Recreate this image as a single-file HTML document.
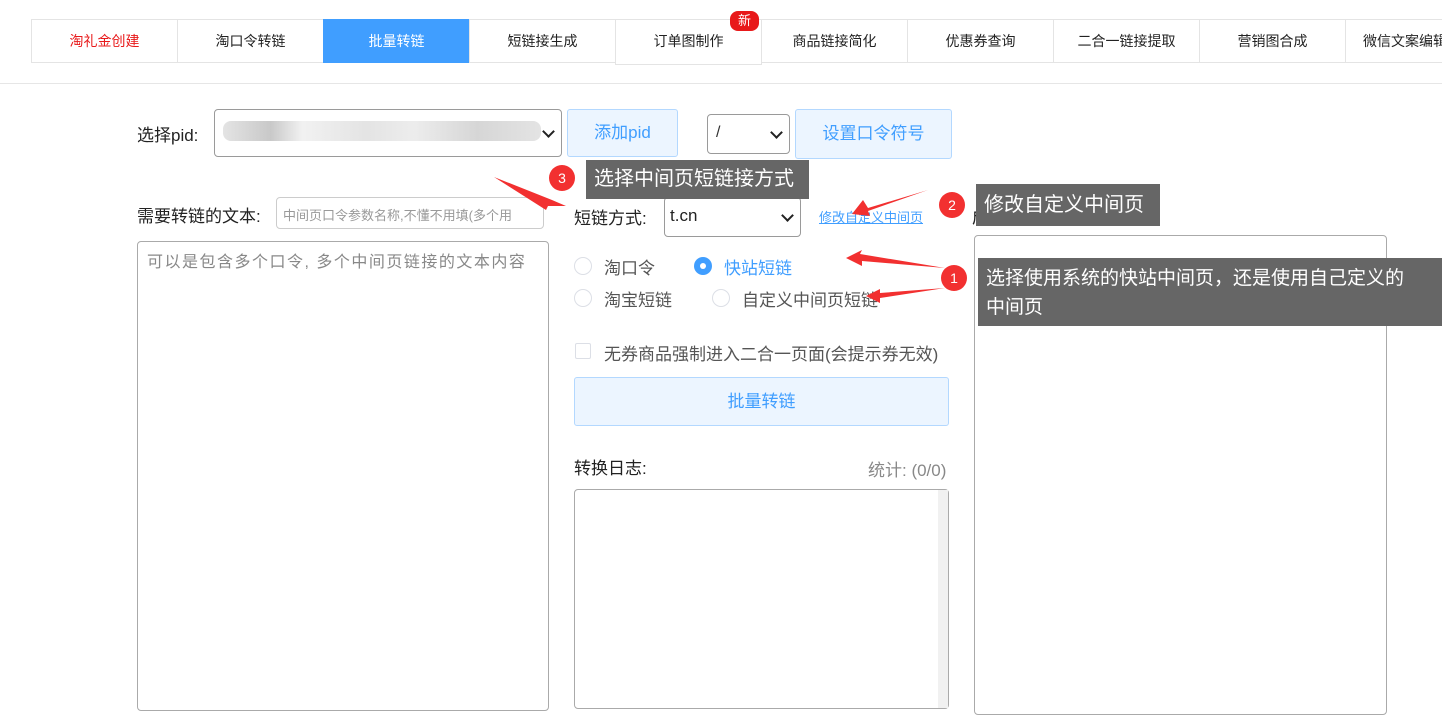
<!DOCTYPE html>
<html><head><meta charset="utf-8"><style>
*{box-sizing:border-box;margin:0;padding:0}
body{width:1442px;height:699px;overflow:hidden;background:#fff;font-family:"Liberation Sans","Noto Sans CJK SC",sans-serif;color:#333;position:relative}
.a{position:absolute}
.tab{position:absolute;top:19px;height:44px;width:147px;border:1px solid #e4e4e4;font-size:14px;line-height:42px;text-align:center;color:#222;background:#fff}
.box{position:absolute;border:1px solid #9a9a9a;border-radius:4px;background:#fff}
.btn{position:absolute;background:#ecf5ff;border:1px solid #b3d8ff;color:#409eff;border-radius:3px;text-align:center;font-size:16px}
.tip{position:absolute;background:#666;color:#fff;font-size:20px;padding:0 8px;white-space:nowrap}
.num{position:absolute;width:26px;height:26px;border-radius:50%;background:#f23030;color:#fff;font-size:14px;text-align:center;line-height:26px}
.r{position:absolute;width:18px;height:18px;border-radius:50%;border:1px solid #dcdfe6}
.lbl{position:absolute;font-size:17px;color:#555}
.chev{position:absolute;right:8px;top:11px;width:9px;height:9px;border-right:2px solid #222;border-bottom:2px solid #222;transform:rotate(45deg)}
</style></head><body>
<div class="tab" style="left:31px;color:#e8191a">淘礼金创建</div>
<div class="tab" style="left:177px">淘口令转链</div>
<div class="tab" style="left:323px;background:#409eff;color:#fff;border-color:#409eff">批量转链</div>
<div class="tab" style="left:469px">短链接生成</div>
<div class="tab" style="left:615px;height:46px">订单图制作</div>
<div class="a" style="left:730px;top:11px;width:29px;height:20px;background:#e8191a;color:#fff;border-radius:8px;font-size:13px;text-align:center;line-height:20px">新</div>
<div class="tab" style="left:761px">商品链接简化</div>
<div class="tab" style="left:907px">优惠券查询</div>
<div class="tab" style="left:1053px">二合一链接提取</div>
<div class="tab" style="left:1199px">营销图合成</div>
<div class="tab" style="left:1345px;width:120px">微信文案编辑</div>
<div class="a" style="left:0;top:83px;width:1442px;height:1px;background:#e6e6e6"></div>

<div class="a" style="left:137px;top:121px;font-size:17px;color:#222">选择pid:</div>
<div class="box" style="left:214px;top:109px;width:348px;height:48px">
 <div class="a" style="left:8px;top:11px;width:318px;height:20px;background:linear-gradient(90deg,#ddd,#bbb 15%,#eee 25%,#ddd 45%,#e8e8e8 60%,#ccc 80%,#ddd);border-radius:8px;opacity:.8"></div>
 <div class="chev" style="top:17px"></div></div>
<div class="btn" style="left:567px;top:109px;width:111px;height:48px;line-height:46px;font-size:17px">添加pid</div>
<div class="box" style="left:707px;top:114px;width:83px;height:40px"><span class="a" style="left:8px;top:9px;font-size:16px">/</span><div class="chev" style="top:13px"></div></div>
<div class="btn" style="left:795px;top:109px;width:157px;height:50px;line-height:48px;font-size:17px">设置口令符号</div>

<div class="a" style="left:137px;top:202px;font-size:17px;color:#222">需要转链的文本:</div>
<div class="a" style="left:276px;top:197px;width:268px;height:32px;border:1px solid #ccc;border-radius:4px;font-size:13px;color:#999;padding:7px 6px;white-space:nowrap;overflow:hidden">中间页口令参数名称,不懂不用填(多个用</div>
<div class="a" style="left:137px;top:241px;width:412px;height:470px;border:1px solid #aaa;border-radius:4px;font-size:16px;color:#888;padding:6px 9px;letter-spacing:1.5px">可以是包含多个口令, 多个中间页链接的文本内容</div>

<div class="a" style="left:574px;top:204px;font-size:17px;color:#222">短链方式:</div>
<div class="box" style="left:664px;top:197px;width:137px;height:40px"><span class="a" style="left:5px;top:8px;font-size:17px;color:#222">t.cn</span><div class="chev" style="top:13px"></div></div>
<div class="a" style="left:819px;top:207px;font-size:13px;color:#409eff;text-decoration:underline">修改自定义中间页</div>
<div class="a" style="left:972px;top:203px;font-size:17px;color:#222">成功转链的文本:</div>
<div class="a" style="left:974px;top:235px;width:413px;height:480px;border:1px solid #aaa;border-radius:4px"></div>

<div class="r" style="left:574px;top:257px"></div><div class="lbl" style="left:604px;top:254px">淘口令</div>
<div class="a" style="left:694px;top:257px;width:18px;height:18px;border-radius:50%;background:#409eff"><div class="a" style="left:6px;top:6px;width:6px;height:6px;border-radius:50%;background:#fff"></div></div>
<div class="lbl" style="left:724px;top:254px;color:#409eff">快站短链</div>
<div class="r" style="left:574px;top:289px"></div><div class="lbl" style="left:604px;top:286px">淘宝短链</div>
<div class="r" style="left:712px;top:289px"></div><div class="lbl" style="left:742px;top:286px">自定义中间页短链</div>
<div class="a" style="left:575px;top:343px;width:16px;height:16px;border:1px solid #dcdfe6;border-radius:2px"></div>
<div class="lbl" style="left:604px;top:340px">无券商品强制进入二合一页面(会提示券无效)</div>
<div class="btn" style="left:574px;top:377px;width:375px;height:49px;line-height:47px;font-size:17px">批量转链</div>
<div class="a" style="left:574px;top:454px;font-size:17px;color:#222">转换日志:</div>
<div class="a" style="left:868px;top:456px;font-size:17px;color:#888">统计: (0/0)</div>
<div class="a" style="left:574px;top:489px;width:375px;height:220px;border:1px solid #aaa;border-radius:4px"><div class="a" style="right:0;top:0;width:10px;height:100%;background:#f1f1f1"></div></div>

<svg class="a" style="left:0;top:0" width="1442" height="699">
<polygon points="494,177 552,200 566,206 548,206 546,210" fill="#f23030"/>
<polygon points="928,190 868,208 863,200 852,214 870,216 868,211" fill="#f23030"/>
<polygon points="945,268 860,254 862,250 846,258 862,266 862,261" fill="#f23030"/>
<polygon points="945,288 880,293 880,289 866,296 880,303 880,298" fill="#f23030"/>
</svg>
<div class="num" style="left:549px;top:165px">3</div>
<div class="tip" style="left:586px;top:160px;height:39px;line-height:39px;width:223px">选择中间页短链接方式</div>
<div class="num" style="left:939px;top:192px">2</div>
<div class="tip" style="left:976px;top:184px;height:42px;line-height:42px;width:184px">修改自定义中间页</div>
<div class="num" style="left:941px;top:265px">1</div>
<div class="tip" style="left:978px;top:258px;width:464px;height:68px;line-height:29px;padding-top:6px;font-size:19px">选择使用系统的快站中间页，还是使用自己定义的<br>中间页</div>
</body></html>
